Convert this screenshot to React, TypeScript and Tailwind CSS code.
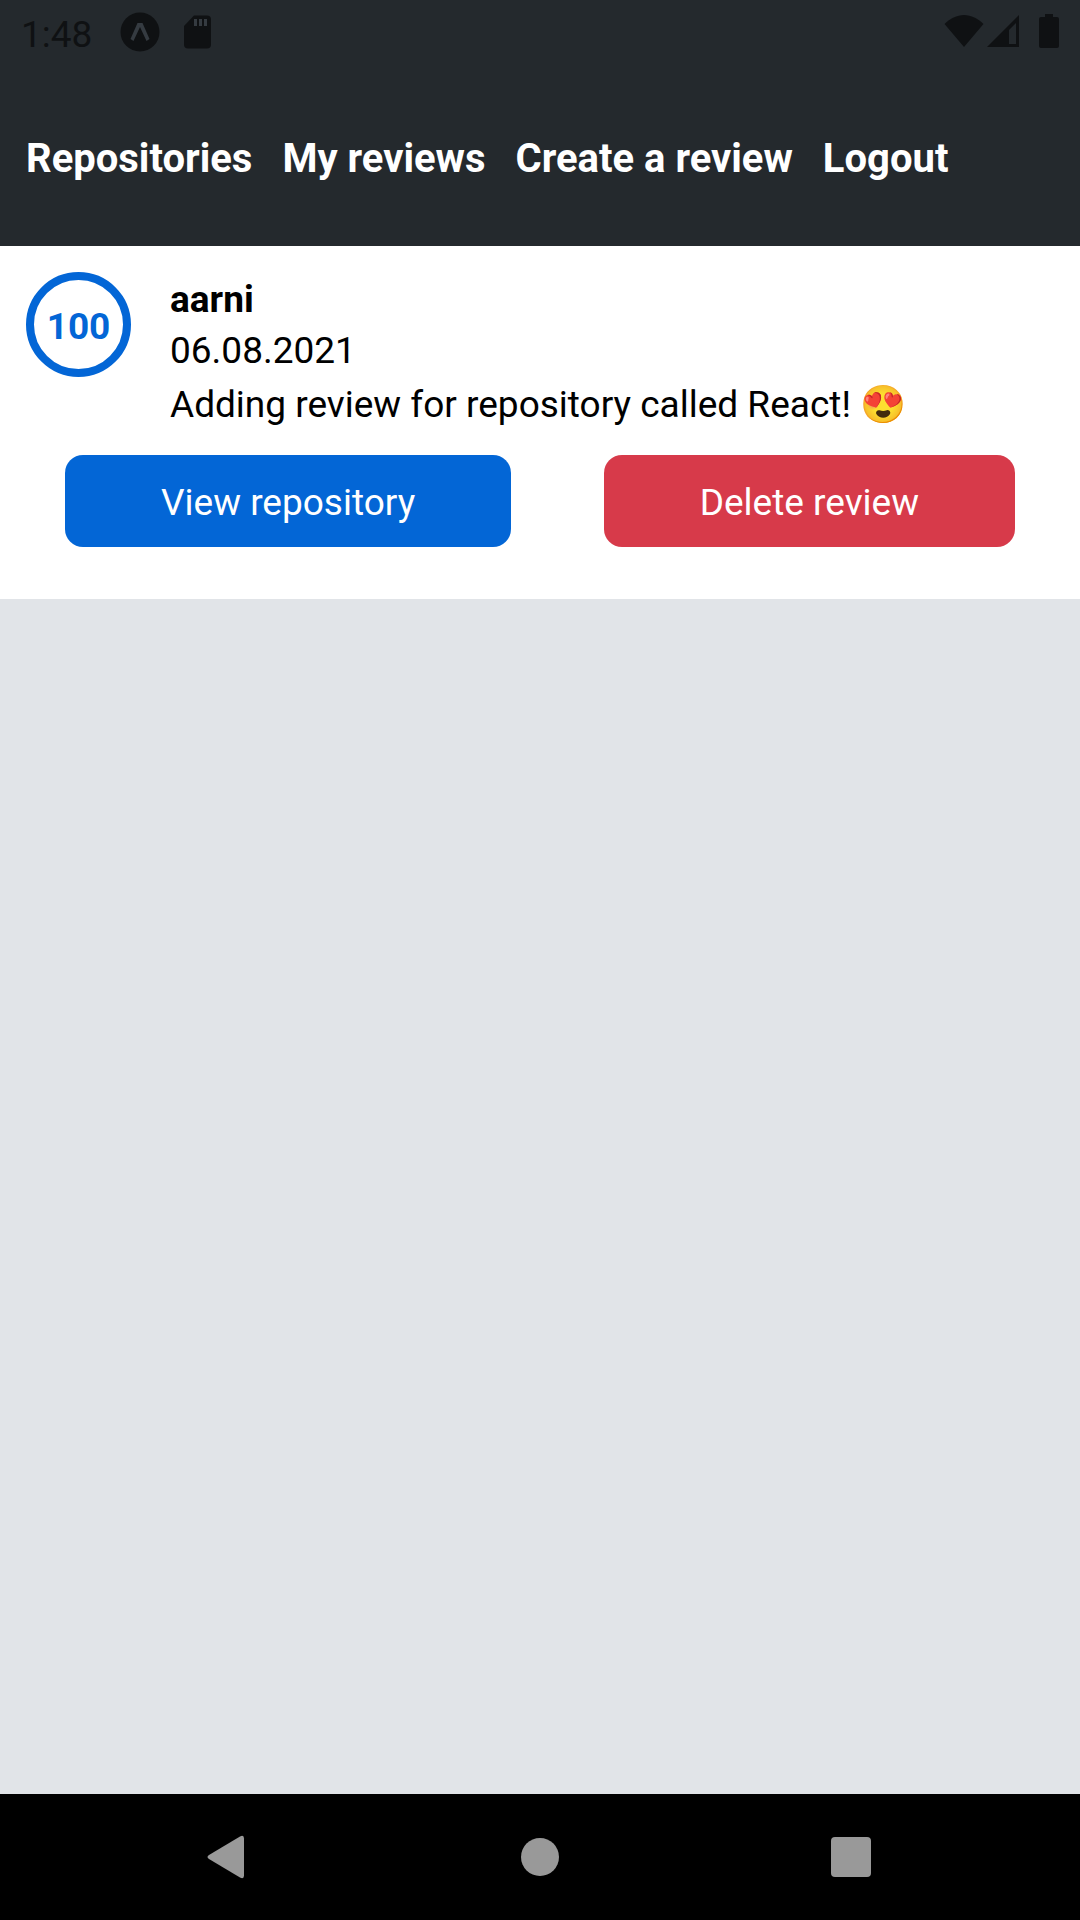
const navItems = ["Repositories", "My reviews", "Create a review", "Logout"];

function StatusBar() {
  return (
    <div className="flex h-16 items-center justify-between pl-[21px] pr-[21px] text-[#0f1113]">
      <div className="flex items-center">
        <span className="pt-1 text-[37px] leading-none">1:48</span>
        <svg className="ml-7 h-10 w-10" viewBox="0 0 40 40" aria-label="Expo">
          <circle cx="20" cy="20" r="19.5" fill="currentColor" />
          <path d="M17.5 11h5l7 16-3 2-6.500-14-6.500 14-3-2z" fill="#353b41" />
        </svg>
        <svg className="ml-[22px] h-10 w-8" viewBox="0 0 32 40" aria-label="SD card">
          <path d="M12 3.500h13a4 4 0 0 1 4 4v25a4 4 0 0 1-4 4H6a4 4 0 0 1-4-4V14z" fill="currentColor" />
          <path d="M12 7h3v7h-3zM17 7h3v7h-3zM22 7h3v7h-3z" fill="#353b41" />
        </svg>
      </div>
      <div className="flex items-center">
        <svg className="h-10 w-10" viewBox="0 0 40 40" aria-label="Wi-Fi">
          <path d="M0.500 12C6 6.500 13 3 20 3s14 3.500 19.500 9L20 35z" fill="currentColor" />
        </svg>
        <svg className="ml-[3px] h-10 w-8" viewBox="0 0 32 40" aria-label="Mobile signal">
          <path d="M0 35 32 3v32z" fill="currentColor" />
          <path d="M22 18l7-7v21h-7z" fill="#24292d" />
        </svg>
        <svg className="ml-5 h-10 w-5" viewBox="0 0 20 40" aria-label="Battery">
          <path d="M6 2h8v3h4a2 2 0 0 1 2 2v27a2 2 0 0 1-2 2H2a2 2 0 0 1-2-2V7a2 2 0 0 1 2-2h4z" fill="currentColor" />
        </svg>
      </div>
    </div>
  );
}

function ReviewCard() {
  return (
    <article className="bg-white px-[26px] pt-[26px] pb-[52px] text-[37px] text-black">
      <div className="flex gap-[39px]">
        <div className="flex h-[105px] w-[105px] shrink-0 items-center justify-center rounded-full border-8 border-[#0366d6] pt-1 font-bold text-[#0366d6]">
          100
        </div>
        <div className="flex flex-col pt-[3px]">
          <h2 className="font-bold leading-[50px]">aarni</h2>
          <time className="leading-[52px]">06.08.2021</time>
          <p className="leading-[56px]">Adding review for repository called React! 😍</p>
        </div>
      </div>
      <div className="mt-[22px] flex justify-between px-[39px]">
        <button type="button" className="h-[92px] rounded-[18px] bg-[#0366d6] px-24 pt-1 text-white">
          View repository
        </button>
        <button type="button" className="h-[92px] rounded-[18px] bg-[#d73a4a] px-24 pt-1 text-white">
          Delete review
        </button>
      </div>
    </article>
  );
}

function SystemNav() {
  return (
    <nav aria-label="System" className="grid h-[126px] grid-cols-3 bg-black px-[73px] text-[#999999]">
      <button type="button" aria-label="Back" className="flex items-center justify-center">
        <svg className="h-12 w-12" viewBox="0 0 48 48">
          <path d="M4 22 35 3.500q4-2 4 2v37q0 4-4 2L4 26q-3-2 0-4z" fill="currentColor" />
        </svg>
      </button>
      <button type="button" aria-label="Home" className="flex items-center justify-center">
        <span className="h-[38px] w-[38px] rounded-full bg-current" />
      </button>
      <button type="button" aria-label="Recent apps" className="flex items-center justify-center">
        <span className="h-10 w-10 rounded bg-current" />
      </button>
    </nav>
  );
}

export default function App() {
  return (
    <div className="flex min-h-screen flex-col bg-[#e1e4e8] font-[Roboto,'Noto_Color_Emoji',sans-serif]">
      <header className="bg-[#24292d]">
        <StatusBar />
        <nav aria-label="Main" className="flex flex-wrap gap-x-[30px] px-[26px] pt-[71px] pb-[63px] text-[40px] font-bold leading-[48px] text-white">
          {navItems.map((item) => (
            <a key={item} href="#">
              {item}
            </a>
          ))}
        </nav>
      </header>
      <main className="flex-1">
        <ReviewCard />
      </main>
      <SystemNav />
    </div>
  );
}
